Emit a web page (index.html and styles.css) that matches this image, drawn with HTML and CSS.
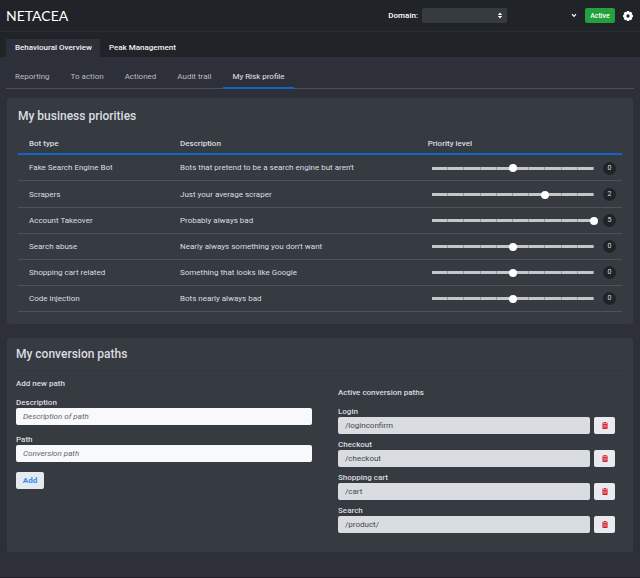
FILE: index.html
```html
<!DOCTYPE html>
<html lang="en">
<head>
  <meta charset="UTF-8">
  <title>Netacea - My Risk profile</title>
  <link rel="stylesheet" href="styles.css">
</head>
<body>
  <header class="topbar">
    <a class="logo" href="#">NETACEA</a>
    <div class="topbar-right">
      <label for="domain">Domain:</label>
      <div class="select-wrap">
        <select id="domain" class="domain-select"><option></option></select>
        <svg class="select-arrows" viewBox="0 0 6 8"><path d="M3 0.6 5.4 3.3H0.6ZM3 7.4 5.4 4.7H0.6Z" fill="#fff"/></svg>
      </div>
      <button class="icon-btn account-btn" aria-label="Account">
        <svg width="6" height="5" viewBox="0 0 6 5"><path d="M1 1.2 3 3.4 5 1.2" fill="none" stroke="#fff" stroke-width="1.2"/></svg>
      </button>
      <button class="active-btn">Active</button>
      <button class="icon-btn" aria-label="Settings">
        <svg width="10" height="10" viewBox="0 0 20 20">
          <g fill="#fff">
            <rect x="7.5" y="0" width="5" height="20" rx="1"/>
            <rect x="7.5" y="0" width="5" height="20" rx="1" transform="rotate(45 10 10)"/>
            <rect x="7.5" y="0" width="5" height="20" rx="1" transform="rotate(90 10 10)"/>
            <rect x="7.5" y="0" width="5" height="20" rx="1" transform="rotate(135 10 10)"/>
            <circle cx="10" cy="10" r="7.8"/>
          </g>
          <circle cx="10" cy="10" r="3.3" fill="#202327"/>
        </svg>
      </button>
    </div>
  </header>

  <nav class="main-tabs">
    <a class="active" href="#">Behavioural Overview</a>
    <a href="#">Peak Management</a>
  </nav>

  <nav class="sub-tabs">
    <a href="#">Reporting</a>
    <a href="#">To action</a>
    <a href="#">Actioned</a>
    <a href="#">Audit trail</a>
    <a class="active" href="#">My Risk profile</a>
  </nav>

  <main>
    <section class="card priorities">
      <h2>My business priorities</h2>
      <table>
        <thead>
          <tr><th class="col-type">Bot type</th><th class="col-desc">Description</th><th>Priority level</th></tr>
        </thead>
        <tbody>
          <tr>
            <td>Fake Search Engine Bot</td>
            <td>Bots that pretend to be a search engine but aren't</td>
            <td><div class="level"><input type="range" min="-5" max="5" value="0" aria-label="Fake Search Engine Bot"><output>0</output></div></td>
          </tr>
          <tr>
            <td>Scrapers</td>
            <td>Just your average scraper</td>
            <td><div class="level"><input type="range" min="-5" max="5" value="2" aria-label="Scrapers"><output>2</output></div></td>
          </tr>
          <tr>
            <td>Account Takeover</td>
            <td>Probably always bad</td>
            <td><div class="level"><input type="range" min="-5" max="5" value="5" aria-label="Account Takeover"><output>5</output></div></td>
          </tr>
          <tr>
            <td>Search abuse</td>
            <td>Nearly always something you don't want</td>
            <td><div class="level"><input type="range" min="-5" max="5" value="0" aria-label="Search abuse"><output>0</output></div></td>
          </tr>
          <tr>
            <td>Shopping cart related</td>
            <td>Something that looks like Google</td>
            <td><div class="level"><input type="range" min="-5" max="5" value="0" aria-label="Shopping cart related"><output>0</output></div></td>
          </tr>
          <tr>
            <td>Code injection</td>
            <td>Bots nearly always bad</td>
            <td><div class="level"><input type="range" min="-5" max="5" value="0" aria-label="Code injection"><output>0</output></div></td>
          </tr>
        </tbody>
      </table>
    </section>

    <section class="card conversions">
      <h2>My conversion paths</h2>
      <div class="columns">
        <form class="new-path">
          <h3>Add new path</h3>
          <label for="desc">Description</label>
          <input type="text" id="desc" placeholder="Description of path">
          <label for="path">Path</label>
          <input type="text" id="path" placeholder="Conversion path">
          <button type="button" class="add-btn">Add</button>
        </form>
        <div class="active-paths">
          <h3>Active conversion paths</h3>
          <label for="login">Login</label>
          <div class="path-row">
            <input type="text" id="login" value="/loginconfirm" readonly>
            <button class="delete-btn" aria-label="Delete Login"><svg viewBox="0 0 14 16"><use href="#trash"/></svg></button>
          </div>
          <label for="checkout">Checkout</label>
          <div class="path-row">
            <input type="text" id="checkout" value="/checkout" readonly>
            <button class="delete-btn" aria-label="Delete Checkout"><svg viewBox="0 0 14 16"><use href="#trash"/></svg></button>
          </div>
          <label for="cart">Shopping cart</label>
          <div class="path-row">
            <input type="text" id="cart" value="/cart" readonly>
            <button class="delete-btn" aria-label="Delete Shopping cart"><svg viewBox="0 0 14 16"><use href="#trash"/></svg></button>
          </div>
          <label for="search">Search</label>
          <div class="path-row">
            <input type="text" id="search" value="/product/" readonly>
            <button class="delete-btn" aria-label="Delete Search"><svg viewBox="0 0 14 16"><use href="#trash"/></svg></button>
          </div>
        </div>
      </div>
    </section>
  </main>
  <footer class="footer"></footer>

  <svg class="sprite">
    <symbol id="trash" viewBox="0 0 14 16">
      <path fill="#dc1c24" fill-rule="evenodd" d="M0 1.5h4L5 0h4l1 1.5h4v2H0ZM1 4.5h12v10q0 1.5-1.5 1.5h-9Q1 16 1 14.5ZM4 6.5v7h1v-7ZM6.5 6.5v7h1v-7ZM9 6.5v7h1v-7Z"/>
    </symbol>
  </svg>
</body>
</html>
```
FILE: styles.css
```css
* {
  box-sizing: border-box;
}
body {
  margin: 0;
  min-height: 100vh;
  display: flex;
  flex-direction: column;
  background: #2d3038;
  color: #dcdde0;
  font-family: Roboto, sans-serif;
  font-size: 8px;
  line-height: 10px;
}
a {
  color: inherit;
  text-decoration: none;
}
button, input, select {
  font-family: inherit;
  font-size: inherit;
  line-height: inherit;
  margin: 0;
}
button {
  cursor: pointer;
  border: none;
  border-radius: 2px;
}
h2, h3 {
  margin: 0;
  font-weight: 500;
}
h2 {
  font-size: 12px;
  line-height: 14px;
}
h3 {
  font-size: 8px;
}
label {
  font-weight: 500;
}

/* top bar */
.topbar {
  display: flex;
  align-items: center;
  justify-content: space-between;
  height: 32px;
  padding: 0 7px 0 6px;
  background: #202327;
  border-bottom: 1px solid #2a2d31;
}
.logo {
  font-family: Lato, sans-serif;
  font-size: 14px;
  line-height: 18px;
  color: #fff;
}
.topbar-right {
  display: flex;
  align-items: center;
}
.topbar-right label {
  color: #fff;
  margin-right: 4px;
}
.select-wrap {
  position: relative;
  display: flex;
}
.domain-select {
  appearance: none;
  width: 85px;
  height: 15px;
  background: #363a41;
  border: none;
  border-radius: 2px;
  color: #fff;
}
.select-arrows {
  position: absolute;
  right: 4px;
  top: 4px;
  width: 6px;
  height: 7px;
  pointer-events: none;
}
.icon-btn {
  display: flex;
  padding: 0;
  background: none;
}
.account-btn {
  margin: 0 8px 0 64px;
}
.active-btn {
  width: 30px;
  height: 15px;
  padding: 0;
  margin-right: 8px;
  background: #24a03c;
  color: #fff;
  font-size: 7px;
  font-weight: 500;
}

/* tabs */
.main-tabs {
  display: flex;
  padding: 7px 6px 0;
  background: #202327;
  font-weight: 500;
  color: #eeeff1;
}
.main-tabs a {
  padding: 4px 8px 4px 9px;
}
.main-tabs .active {
  background: #2d3038;
}
.sub-tabs {
  display: flex;
  margin: 10px 6px 0;
  border-bottom: 1px solid #4d5058;
  color: #b9bbc0;
}
.sub-tabs a {
  padding: 5px 9px 6px;
  margin-right: 3px;
}
.sub-tabs .active {
  color: #e4e5e8;
  box-shadow: 0 1px #1266c8, inset 0 -1px #1266c8;
}

/* cards */
main {
  padding: 9px 7px 24px;
  flex: 1;
}
.card {
  background: #363a41;
  border-radius: 2px;
}
.priorities {
  padding: 11px 11px 12px;
  margin-bottom: 14px;
}
table {
  width: 100%;
  height: 184px;
  margin-top: 5px;
  border-collapse: collapse;
  table-layout: fixed;
}
thead tr {
  height: 26px;
}
th, td {
  text-align: left;
  padding: 1px 6px 0 11px;
  border-bottom: 1px solid #4f525a;
}
th {
  padding-top: 6px;
  font-weight: 500;
  border-bottom: 2px solid #1266c8;
}
.col-type {
  width: 25%;
}
.col-desc {
  width: 41%;
}
.level {
  display: flex;
  align-items: center;
  gap: 5px;
}
.level input {
  appearance: none;
  flex: 1;
  min-width: 0;
  height: 8px;
  background: repeating-linear-gradient(to right, #c6c6ca 0 9.4%, #94969b 9.4% 10%) center / calc(100% - 8px) 3px no-repeat;
}
.level input::-webkit-slider-thumb {
  appearance: none;
  width: 8px;
  height: 8px;
  border-radius: 50%;
  background: #fff;
}
.level output {
  width: 13px;
  height: 13px;
  border-radius: 50%;
  background: #202327;
  font-size: 7px;
  line-height: 13px;
  text-align: center;
}

.conversions {
  padding: 9px 9px 19px;
}
.conversions h2 {
  padding-bottom: 9px;
  border-bottom: 1px solid #32353c;
}
.columns {
  display: grid;
  grid-template-columns: 1fr 1fr;
}
.columns label {
  display: block;
}
.columns input {
  display: block;
  width: 100%;
  height: 17px;
  padding: 0 7px;
  border: none;
  border-radius: 2px;
  background: #f8f9fb;
  color: #43474d;
}
.columns input::placeholder {
  color: #62666c;
  font-style: italic;
}
.columns h3 {
  margin-bottom: 9px;
}
.new-path {
  padding: 8px 8px 0 0;
}
.new-path input {
  margin-bottom: 10px;
}
.add-btn {
  width: 28px;
  height: 17px;
  padding: 0;
  background: #e6e9ee;
  color: #2f8af5;
  font-weight: 700;
}
.active-paths {
  padding: 17px 9px 0 18px;
}
.path-row {
  display: flex;
  gap: 4px;
  margin-bottom: 6px;
}
.path-row:last-child {
  margin-bottom: 0;
}
.active-paths input {
  flex: 1;
  background: #d9dde1;
}
.delete-btn {
  display: flex;
  align-items: center;
  justify-content: center;
  width: 21px;
  padding: 0;
  background: #e8eaef;
}
.delete-btn svg {
  width: 6px;
  height: 7px;
}
.footer {
  height: 1px;
  background: #231f29;
}
.sprite {
  display: none;
}
```
